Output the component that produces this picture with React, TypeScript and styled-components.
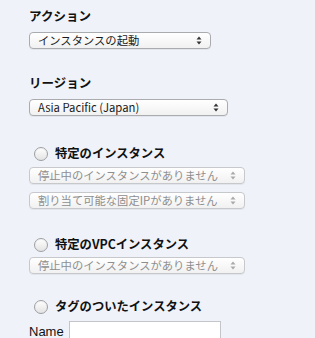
import styled, { createGlobalStyle } from 'styled-components';

const GlobalStyle = createGlobalStyle`
    html, body {
        margin: 0;
        padding: 0;
        background: #eff2f8;
    }
    body {
        font-family: "Noto Sans CJK JP", "Liberation Sans", sans-serif;
        color: #111;
        line-height: 1;
    }
`

const Page = styled.div`
    display: flex;
    flex-direction: column;
    padding: 7px 0 0 29px;
    width: 315px;
    height: 338px;
    box-sizing: border-box;
    overflow: hidden;
`

const Title = styled.div`
    font-size: 12.5px;
    font-weight: bold;
    line-height: 17px;
    height: 17px;
    margin-bottom: 8px;
`

const Section = styled.div<{ $gap: number }>`
    display: flex;
    flex-direction: column;
    margin-bottom: ${p => p.$gap}px;
`

const SelectBox = styled.div<{ $width: number; $disabled?: boolean }>`
    display: flex;
    align-items: center;
    justify-content: space-between;
    box-sizing: border-box;
    width: ${p => p.$width}px;
    height: 17px;
    padding: 0 8px 0 8px;
    border: 1px solid ${p => (p.$disabled ? '#c6c8cc' : '#a9abae')};
    border-radius: 4px;
    background: linear-gradient(#ffffff, #f1f1f1);
    box-shadow: 0 1px 0 rgba(0, 0, 0, 0.05);
    font-size: 11.3px;
    line-height: 15px;
    color: ${p => (p.$disabled ? '#8e8e8e' : '#1a1a1a')};
    white-space: nowrap;
    & + & {
        margin-top: 8px;
    }
`

const Arrows = styled.span<{ $disabled?: boolean }>`
    display: flex;
    align-items: center;
    color: ${p => (p.$disabled ? '#a9a9a9' : '#333')};
`

const RadioRow = styled.div<{ $after?: number }>`
    display: flex;
    align-items: center;
    gap: 7px;
    height: 17px;
    line-height: 17px;
    margin: 0 0 ${p => p.$after ?? 5}px 5px;
    font-size: 12.3px;
    font-weight: bold;
`

const Radio = styled.span`
    width: 12px;
    height: 12px;
    border-radius: 50%;
    border: 1px solid #9d9fa3;
    background: linear-gradient(#ffffff, #e3e3e3);
    box-shadow: inset 0 1px 1px rgba(0, 0, 0, 0.05);
`

const NameRow = styled.div`
    display: flex;
    align-items: flex-start;
    gap: 5px;
    margin-top: 1px;
    font-size: 13px;
    font-family: "Liberation Sans", sans-serif;
`

const NameLabel = styled.span`
    line-height: 15px;
    margin-top: 3px;
`

const NameInput = styled.div`
    width: 152px;
    height: 22px;
    background: #fff;
    border: 1px solid #c3c5c8;
    box-sizing: border-box;
`

const Stepper = ({ disabled }: { disabled?: boolean }) => (
    <Arrows $disabled={disabled}>
        <svg width="6" height="9" viewBox="0 0 6 9">
            <path d="M0.5 3.5 L3 0.5 L5.5 3.5 Z" fill="currentColor" />
            <path d="M0.5 5.5 L3 8.5 L5.5 5.5 Z" fill="currentColor" />
        </svg>
    </Arrows>
)

const Select = ({ label, width, disabled }: { label: string; width: number; disabled?: boolean }) => (
    <SelectBox $width={width} $disabled={disabled}>
        <span>{label}</span>
        <Stepper disabled={disabled} />
    </SelectBox>
)

export default function App() {
    return (
        <>
            <GlobalStyle />
            <Page>
                <Section $gap={25}>
                    <Title>アクション</Title>
                    <Select label="インスタンスの起動" width={182} />
                </Section>
                <Section $gap={29}>
                    <Title>リージョン</Title>
                    <Select label="Asia Pacific (Japan)" width={199} />
                </Section>
                <Section $gap={27}>
                    <RadioRow><Radio />特定のインスタンス</RadioRow>
                    <Select label="停止中のインスタンスがありません" width={216} disabled />
                    <Select label="割り当て可能な固定IPがありません" width={216} disabled />
                </Section>
                <Section $gap={24}>
                    <RadioRow $after={4}><Radio />特定のVPCインスタンス</RadioRow>
                    <Select label="停止中のインスタンスがありません" width={216} disabled />
                </Section>
                <Section $gap={0}>
                    <RadioRow><Radio />タグのついたインスタンス</RadioRow>
                    <NameRow>
                        <NameLabel>Name</NameLabel>
                        <NameInput />
                    </NameRow>
                </Section>
            </Page>
        </>
    );
}
